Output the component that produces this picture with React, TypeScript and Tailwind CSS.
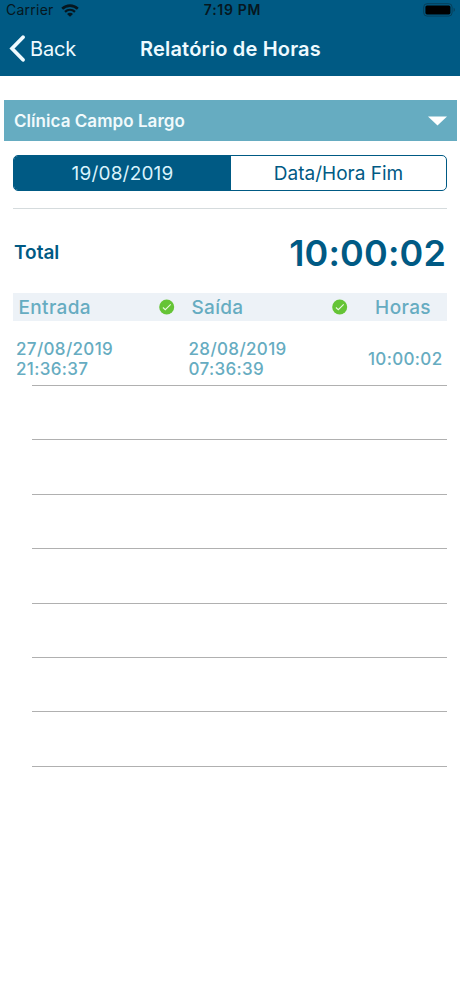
import React from "react";

const entries = [
  {
    start: ["27/08/2019", "21:36:37"],
    end: ["28/08/2019", "07:36:39"],
    hours: "10:00:02",
  },
];

const EMPTY_ROWS = 7;

const CheckBadge = () => (
  <svg className="-mt-px" width="16" height="16" viewBox="0 0 16 16" fill="none">
    <circle cx="7.7" cy="8" r="7.5" fill="#65c436" />
    <path d="M3.9 8.5L6.3 10.7L11.7 5.4" stroke="#e9f8e0" strokeWidth="1.1" />
  </svg>
);

const StatusBar = () => (
  <div className="flex h-5 items-center text-sm leading-5 text-[#061720]">
    <div className="flex w-[153px] items-center pl-[6px]">
      <span className="tracking-[0.25px]">Carrier</span>
      <svg className="ml-[7px]" width="18" height="13" viewBox="0 0 18 13" fill="none">
        <path d="M1.2 4.8C5.6 0.6 12.4 0.6 16.8 4.8" stroke="currentColor" strokeWidth="2.6" />
        <path d="M4 7.8C6.9 5.2 11.1 5.2 14 7.8" stroke="currentColor" strokeWidth="2.3" />
        <path d="M9 12.8L6 9.9C7.8 8.5 10.2 8.5 12 9.9Z" fill="currentColor" />
      </svg>
    </div>
    <div className="flex-1 pl-[5px] text-center font-semibold tracking-[0.7px] whitespace-nowrap">
      7:19 PM
    </div>
    <div className="flex w-[153px] justify-end pr-[4px]">
      <svg width="33" height="14" viewBox="0 0 33 14" fill="none">
        <rect x="0.7" y="0.7" width="28.4" height="12.4" rx="3.4" stroke="#073f59" strokeWidth="1" />
        <rect x="2.4" y="2.4" width="25" height="9" rx="1.6" fill="#000" />
        <path d="M30.6 4.8C32.4 5.5 32.4 8.3 30.6 9Z" fill="#073f59" />
      </svg>
    </div>
  </div>
);

const NavBar = () => (
  <div className="grid h-14 grid-cols-[120px_1fr_120px] items-center pt-px text-[#eefaff]">
    <div className="flex items-center pl-[9px]">
      <svg width="16" height="27" viewBox="0 0 16 27" fill="none">
        <path
          d="M14 2.2L3 13.5L14 24.8"
          stroke="currentColor"
          strokeWidth="3.7"
          strokeLinecap="round"
        />
      </svg>
      <span className="ml-[5px] pt-px text-[20px] tracking-[-0.15px]">Back</span>
    </div>
    <h1 className="pt-px pl-px text-center text-[20px] font-semibold tracking-[0.18px] whitespace-nowrap">
      Relatório de Horas
    </h1>
  </div>
);

const App: React.FC = () => {
  return (
    <div className="min-h-[996px] w-full bg-white font-['Inter',sans-serif]">
      <header className="h-[76px] bg-[#005a84]">
        <StatusBar />
        <NavBar />
      </header>

      <button className="mt-[24.4px] ml-[4px] flex h-[41px] w-[453px] items-center justify-between bg-[#66acc1] px-[10px] text-[17px] font-semibold text-[#f1fafc]">
        <span className="pt-px tracking-[0.05px]">Clínica Campo Largo</span>
        <svg width="19" height="10" viewBox="0 0 19 10">
          <path d="M0 0.5H19L9.5 9.5Z" fill="#fff" />
        </svg>
      </button>

      <main className="px-[13px]">
        <div className="mt-[13.6px] flex h-9 overflow-hidden rounded-[5px] border-[1.5px] border-[#005a84] text-[19px]">
          <button className="w-[217px] bg-[#005a84] pt-[2px] tracking-[0.2px] text-[#d9f3fc]">
            19/08/2019
          </button>
          <button className="flex-1 pt-[2px] text-[#005a84]">Data/Hora Fim</button>
        </div>

        <div className="mt-[17px] h-px bg-[#d5dbdd]" />

        <div className="flex h-[84px] items-center justify-between pt-[5px] text-[#005a84]">
          <span className="pl-px text-[19px] font-semibold">Total</span>
          <span className="pr-px text-[36px] font-semibold tracking-[0.15px]">10:00:02</span>
        </div>

        <div className="grid h-7 grid-cols-[173px_173px_1fr] items-center bg-[#edf2f7] text-[19px] font-medium text-[#66acc1]">
          <div className="flex items-center justify-between pr-[11px] pl-[5.5px]">
            <span className="pt-px tracking-[0.35px]">Entrada</span>
            <CheckBadge />
          </div>
          <div className="flex items-center justify-between pr-[11px] pl-[5.5px]">
            <span className="pt-px tracking-[0.3px]">Saída</span>
            <CheckBadge />
          </div>
          <span className="pt-px pr-[16px] text-right tracking-[0.4px]">Horas</span>
        </div>

        {entries.map((entry) => (
          <div key={entry.hours} className="h-[65px]">
            <div className="grid h-[64px] grid-cols-[173px_173px_1fr] items-center pt-[13px] text-[17px] leading-5 font-medium tracking-[0.35px] text-[#66acc1]">
              <div className="pl-[3px]">
                {entry.start.map((line) => (
                  <div key={line}>{line}</div>
                ))}
              </div>
              <div className="pl-[2.5px]">
                {entry.end.map((line) => (
                  <div key={line}>{line}</div>
                ))}
              </div>
              <span className="pr-[4.5px] text-right">{entry.hours}</span>
            </div>
            <div className="ml-[19px] h-px bg-[#b0b0b0]" />
          </div>
        ))}
        {Array.from({ length: EMPTY_ROWS }, (_, i) => (
          <div key={i} className="ml-[19px] h-[54.4px] border-b border-[#b0b0b0]" />
        ))}
      </main>
    </div>
  );
};

export default App;
